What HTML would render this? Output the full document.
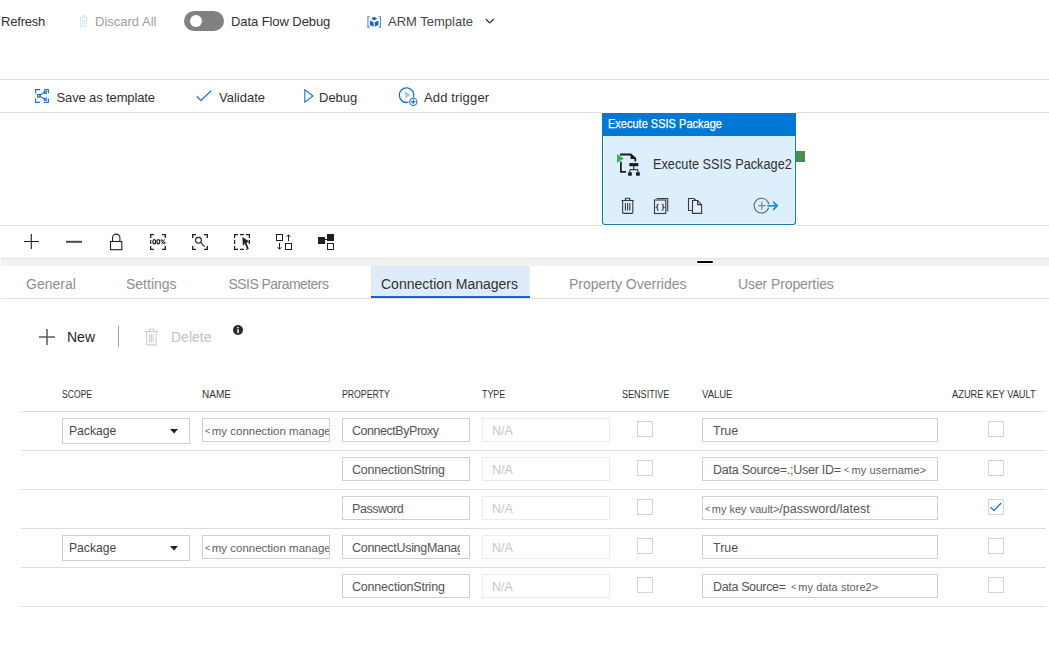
<!DOCTYPE html>
<html><head><meta charset="utf-8">
<style>
*{box-sizing:border-box;margin:0;padding:0}
html,body{width:1049px;height:652px;overflow:hidden;background:#fff}
body{font-family:"Liberation Sans",sans-serif;color:#323130;position:relative}
.a{position:absolute;white-space:nowrap}
.hl{position:absolute;height:1px;background:#e1dfdd}
.t14{font-size:13px;line-height:16px}
svg{position:absolute;overflow:visible}
.tab{position:absolute;top:266px;height:32px;font-size:14px;line-height:32px;color:#908e8c;white-space:nowrap}
.hd{position:absolute;top:388px;font-size:10px;line-height:13px;color:#323130;white-space:nowrap}
.rl{position:absolute;left:21px;width:1025px;height:1px;background:#e1dfdd}
.inp{position:absolute;height:24px;border:1px solid #d0d0d0;background:#fff;font-size:12.5px;line-height:25px;padding-left:9px;color:#555453;overflow:hidden;white-space:nowrap}
.dis{border-color:#edebe9;color:#c8c6c4}
.cb{position:absolute;width:16px;height:16px;border:1px solid #d4d4d4;background:#fff}
.ph{font-size:11px;color:#605e5c}
</style></head><body>

<!-- top bar -->
<div class="a t14" id="t_refresh" style="left:1px;letter-spacing:-0.2px;top:14px;color:#323130">Refresh</div>
<svg style="left:79px;top:15px" width="9" height="12" viewBox="0 0 9 12"><g fill="none" stroke="#d6e4f7" stroke-width="1"><path d="M0.5 2.5h8M3 2.5V0.8h3v1.7M1.5 2.5v9h6v-9"/></g><rect x="3" y="4" width="3" height="6" fill="#e3ecf9"/></svg>
<div class="a t14" id="t_discard" style="left:95px;top:14px;color:#a19f9d">Discard All</div>
<div class="a" style="left:184px;top:11px;width:40px;height:20px;border-radius:10px;background:#808080"></div>
<div class="a" style="left:190px;top:15px;width:12px;height:12px;border-radius:50%;background:#fff"></div>
<div class="a t14" id="t_dfd" style="left:231px;top:14px;letter-spacing:-0.08px">Data Flow Debug</div>
<svg style="left:367px;top:16px" width="14" height="12" viewBox="0 0 14 12"><g fill="none" stroke="#4f8ae8" stroke-width="1.1"><path d="M2.8 0.7H0.9V11.1H2.8M11.6 0.7H13.5V11.1H11.6"/></g><g fill="#1a5fd6"><path d="M7.2 0.8L10.2 2.6L7.2 4.4L4.2 2.6Z"/><path d="M2.9 4.6L6.6 6.3V10.7L2.9 9Z"/><path d="M11.5 4.6L7.8 6.3V10.7L11.5 9Z"/></g></svg>
<div class="a t14" id="t_arm" style="left:388px;top:14px;color:#484644">ARM Template</div>
<svg style="left:485px;top:18px" width="10" height="7" viewBox="0 0 10 7"><path d="M0.8 1L4.7 5L8.7 1" stroke="#323130" stroke-width="1.2" fill="none"/></svg>

<!-- toolbar 2 -->
<div class="hl" style="left:0;top:79px;width:1049px"></div>
<svg style="left:35px;top:89px" width="14" height="14" viewBox="0 0 14 14"><g stroke="#1a6fd9" stroke-width="1.15" fill="none"><path d="M0.6 4.6V0.6H5M9 0.6h4.4V4.6M13.4 9.4v4H9M5 13.4H0.6V9.4"/><rect x="2.6" y="5.5" width="2.2" height="2.6"/><rect x="9.3" y="2.3" width="2" height="2"/><rect x="9.3" y="9.3" width="2" height="2"/><path d="M4.8 6.3L9.3 3.6M4.8 7.3L9.3 10"/></g></svg>
<div class="a t14" id="t_save" style="left:56.5px;letter-spacing:-0.13px;top:90px">Save as template</div>
<svg style="left:196px;top:90px" width="16" height="12" viewBox="0 0 16 12"><path d="M0.8 6.5L5 10.5L15.2 0.8" stroke="#1a6fd9" stroke-width="1.2" fill="none"/></svg>
<div class="a t14" id="t_validate" style="left:219px;top:90px">Validate</div>
<svg style="left:304px;top:89px" width="10" height="14" viewBox="0 0 10 14"><path d="M0.8 0.8L9 7L0.8 13.2Z" stroke="#1a6fd9" stroke-width="1.1" fill="none"/></svg>
<div class="a t14" id="t_debug" style="left:319px;top:90px">Debug</div>
<svg style="left:399px;top:86.5px" width="20" height="19" viewBox="0 0 20 19"><path d="M14.5 10.5A7.3 7.3 0 1 0 9.5 15.2" stroke="#1a6fd9" stroke-width="1.3" fill="none"/><path d="M6 4.5L11.5 8L6 11.5Z" fill="#a9c8f0"/><circle cx="14.3" cy="14.9" r="3.6" fill="#fff" stroke="#1a6fd9" stroke-width="1.1"/><path d="M14.3 12.6v4.6M12 14.9h4.6" stroke="#1a6fd9" stroke-width="1.1"/></svg>
<div class="a t14" id="t_trigger" style="left:424px;letter-spacing:0.15px;top:90px">Add trigger</div>
<div class="hl" style="left:0;top:112px;width:602px"></div>
<div class="hl" style="left:796px;top:112px;width:253px"></div>

<!-- node -->
<div class="a" style="left:602px;top:113px;width:194px;height:112px;border:1px solid #1a7ba6;border-top:0;border-radius:0 0 3px 3px;background:#ddeefd;box-shadow:inset 1px -1px 0 #eaf5fe,inset -1px 0 0 #eaf5fe"></div>
<div class="a" style="left:602px;top:113px;width:194px;height:23px;background:#0078d4"></div>
<div class="a" id="t_hdr" style="left:607.5px;-webkit-text-stroke:0.25px #fff;transform:scaleX(0.918);transform-origin:0 0;top:116px;font-size:12px;line-height:16px;color:#fff">Execute SSIS Package</div>
<div class="a" style="left:796px;top:151px;width:9px;height:11px;background:#4a8f4f"></div>
<svg style="left:610px;top:145px" width="40" height="40" viewBox="0 0 40 40"><g fill="#1b1a19"><path d="M20.5 9.7L25.5 14H20.5Z"/><rect x="19.3" y="18.1" width="9" height="3.1"/><rect x="18.1" y="27.3" width="3.7" height="3.4"/><rect x="26" y="27.3" width="3.8" height="3.4"/></g><g stroke="#1b1a19" fill="none"><path d="M10 9.5H20.8L25.3 13.5V16.6" stroke-width="1.8"/><path d="M10.9 16.8V26.8H16" stroke-width="1.7"/><path d="M23.8 21V24.7M19.9 24.7H27.9M19.9 24.7V27.5M27.9 24.7V27.5" stroke-width="1"/></g><path d="M7 9L13.8 13.5L7 18.1Z" fill="#3ab54a"/></svg>
<div class="a" id="t_pkg2" style="left:653px;top:155px;transform:scaleX(0.91);transform-origin:0 0;font-size:14px;line-height:18px;color:#323130">Execute SSIS Package2</div>
<svg style="left:612px;top:190px" width="100" height="30" viewBox="0 0 100 30"><g stroke="#3b3a39" stroke-width="1.1" fill="none"><path d="M9.5 10.5H21.8"/><path d="M13.5 10.5V8.2H17.7V10.5"/><path d="M10.6 10.5V22.6Q10.6 23.4 11.4 23.4H20Q20.8 23.4 20.8 22.6V10.5"/><path d="M13.4 13V20.5M15.6 13V20.5M17.8 13V20.5"/><rect x="42.5" y="10" width="11.3" height="13.5"/><path d="M44.6 8.5H55.7V21.6"/><path d="M46.6 14.2H46.1Q45.3 14.2 45.3 15V16.6L44.3 17.2L45.3 17.8V19.3Q45.3 20.1 46.1 20.1H46.6M49.8 14.2H50.3Q51.1 14.2 51.1 15V16.6L52.1 17.2L51.1 17.8V19.3Q51.1 20.1 50.3 20.1H49.8" stroke-width="1.1"/><path d="M80.5 20.5H76.5V8.5H82L85 11.5"/><path d="M80.5 10.5H85.6L89.6 14.6V23.4H80.5Z" fill="#ddeefd"/><path d="M85.6 10.5V14.6H89.6"/></g></svg>
<svg style="left:745px;top:190px" width="40" height="30" viewBox="0 0 40 30"><circle cx="16.5" cy="15.6" r="7.4" stroke="#5f6670" stroke-width="1.1" fill="none"/><path d="M16.8 11.5v8.3M13.1 15.7h7.6" stroke="#7d8794" stroke-width="1.2"/><path d="M21.5 15.7H32.5M28 11.6l4.3 4.1L28 19.9" stroke="#fff" stroke-width="3.6" fill="none"/><path d="M22.2 15.7H32.5M28 11.6l4.3 4.1L28 19.9" stroke="#1597d2" stroke-width="1.9" fill="none"/></svg>

<div class="hl" style="left:0;top:225px;width:602px"></div>
<div class="hl" style="left:796px;top:225px;width:253px"></div>

<!-- zoom toolbar -->
<svg style="left:23px;top:233px" width="17" height="17" viewBox="0 0 17 17"><path d="M8.3 1v15M1 8.5h15" stroke="#201f1e" stroke-width="1.1"/></svg>
<svg style="left:66px;top:240px" width="16" height="3" viewBox="0 0 16 3"><path d="M0 1.8h16" stroke="#4a4a4a" stroke-width="2"/></svg>
<svg style="left:109px;top:233px" width="14" height="18" viewBox="0 0 14 18"><g stroke="#201f1e" stroke-width="1.1" fill="none"><rect x="1.5" y="8.5" width="11.3" height="8.2"/><path d="M3.5 8.5V4.8a3.7 3.7 0 0 1 7.4 0V8.5"/></g></svg>
<svg style="left:150px;top:234px" width="16" height="16" viewBox="0 0 16 16"><g stroke="#201f1e" stroke-width="1.3" fill="none"><path d="M0.7 4V0.7H4M12 0.7h3.3V4M15.3 12v3.3H12M4 15.3H0.7V12"/></g><path d="M0.7 6V10" stroke="#201f1e" stroke-width="1.2"/><g stroke="#201f1e" stroke-width="1.25" fill="none"><ellipse cx="4.3" cy="7.7" rx="1.45" ry="2.05"/><ellipse cx="8.3" cy="7.7" rx="1.45" ry="2.05"/><circle cx="11.7" cy="6.4" r="0.8" stroke-width="1"/><circle cx="14.4" cy="9" r="0.8" stroke-width="1"/><path d="M14.6 5.4L11.5 10" stroke-width="1"/></g></svg>
<svg style="left:192px;top:234px" width="16" height="16" viewBox="0 0 16 16"><g stroke="#201f1e" stroke-width="1.3" fill="none"><path d="M0.7 4V0.7H4M12 0.7h3.3V4M15.3 12v3.3H12M4 15.3H0.7V12"/></g><g stroke="#201f1e" stroke-width="1.1" fill="none"><circle cx="6.5" cy="6.3" r="2.9"/><path d="M8.6 8.4l4 4.2"/></g></svg>
<svg style="left:234px;top:234px" width="17" height="17" viewBox="0 0 17 17"><g stroke="#201f1e" stroke-width="1.2" fill="none"><path d="M0.6 4V0.6H4M6 0.6H10M12 0.6H15.4V4M15.4 6V10M0.6 6V10M0.6 12V15.4H4M6 15.4H10M12 15.4H13"/></g><path d="M8.4 3L15.9 7.9L12.3 8.6L14.8 14.8L13.3 15.6L10.8 9.6L8.9 12Z" fill="#201f1e"/></svg>
<svg style="left:276px;top:233px" width="17" height="18" viewBox="0 0 17 18"><g stroke="#201f1e" stroke-width="1" fill="none"><rect x="0.5" y="1.5" width="6" height="6"/><rect x="9.5" y="10.5" width="6" height="6"/><path d="M12.5 8V1.8M10.5 3.8L12.5 1.8L14.5 3.8M3.5 10V16.2M1.5 14.2L3.5 16.2L5.5 14.2"/></g></svg>
<svg style="left:318px;top:233px" width="17" height="18" viewBox="0 0 17 18"><rect x="0" y="4" width="7" height="7" fill="#201f1e"/><rect x="9" y="1" width="7" height="7" fill="#201f1e"/><rect x="9.5" y="10.5" width="6" height="6" stroke="#201f1e" stroke-width="1" fill="none"/><path d="M6.5 6.5h3" stroke="#201f1e" stroke-width="1"/></svg>

<!-- gray band -->
<div class="a" style="left:1px;top:258px;width:1048px;height:8px;background:#f1f1f1;border-top:1px solid #e3e3e3"></div>
<div class="a" style="left:696px;top:260px;width:18px;height:4px;background:#fff;border-radius:2px"></div>
<div class="a" style="left:697px;top:261px;width:16px;height:2px;background:#000;border-radius:1px"></div>

<!-- tabs -->
<div class="a" style="left:371px;top:266px;width:159px;height:32px;background:#deecf9"></div>
<div class="a" style="left:371px;top:296px;width:159px;height:2px;background:#0f62d8"></div>
<div class="tab" id="t_gen" style="left:26px;top:268px">General</div>
<div class="tab" id="t_set" style="left:126px;top:268px">Settings</div>
<div class="tab" id="t_ssis" style="left:228.5px;letter-spacing:-0.55px;top:268px">SSIS Parameters</div>
<div class="tab" id="t_cm" style="left:381px;top:268px;color:#323130">Connection Managers</div>
<div class="tab" id="t_po" style="left:569px;top:268px">Property Overrides</div>
<div class="tab" id="t_up" style="left:738px;letter-spacing:-0.1px;top:268px">User Properties</div>
<div class="hl" style="left:1px;top:298px;width:1048px"></div>

<!-- New/Delete -->
<svg style="left:38px;top:328px" width="18" height="18" viewBox="0 0 18 18"><path d="M9 1v16M1 9h16" stroke="#5a5958" stroke-width="1.5"/></svg>
<div class="a" id="t_new" style="left:67px;top:328px;font-size:14px;line-height:18px;color:#201f1e">New</div>
<div class="a" style="left:118px;top:326px;width:1px;height:21px;background:#a19f9d"></div>
<svg style="left:144px;top:328px" width="15" height="18" viewBox="0 0 15 18"><g stroke="#cfcecd" stroke-width="1.1" fill="none"><path d="M0.8 3.6h13.2M5.2 3.6V1.4h4.4v2.2M2.6 3.6v12.8q0 .5.5.5h8.6q.5 0 .5-.5V3.6M5.6 6.2v8.2M7.4 6.2v8.2M9.2 6.2v8.2"/></g></svg>
<div class="a" id="t_del" style="left:171px;top:328px;font-size:14px;line-height:18px;color:#c2c1c0">Delete</div>
<svg style="left:233px;top:325px" width="10" height="10" viewBox="0 0 10 10"><circle cx="5" cy="5" r="5" fill="#2b2a29"/><path d="M5 4.3v3.7" stroke="#fff" stroke-width="1.5"/><circle cx="5" cy="2.6" r="0.85" fill="#fff"/></svg>

<!-- table header -->
<div class="hd" style="left:62px;transform:scaleX(0.86);transform-origin:0 0">SCOPE</div>
<div class="hd" style="left:202px;transform:scaleX(1.0);transform-origin:0 0">NAME</div>
<div class="hd" style="left:342px;transform:scaleX(0.87);transform-origin:0 0">PROPERTY</div>
<div class="hd" style="left:482px;transform:scaleX(0.89);transform-origin:0 0">TYPE</div>
<div class="hd" style="left:622px;transform:scaleX(0.905);transform-origin:0 0">SENSITIVE</div>
<div class="hd" style="left:702px;transform:scaleX(0.95);transform-origin:0 0">VALUE</div>
<div class="hd" style="left:952px;transform:scaleX(0.93);transform-origin:0 0">AZURE KEY VAULT</div>

<div class="rl" style="top:411px"></div>
<div class="rl" style="top:450px"></div>
<div class="rl" style="top:489px"></div>
<div class="rl" style="top:528px"></div>
<div class="rl" style="top:567px"></div>
<div class="rl" style="top:606px"></div>

<!-- row 1 -->
<div class="inp" style="left:62px;top:418px;width:128px;height:26px;line-height:24px;padding-left:6px;font-size:13.5px;color:#484644"><span style="display:inline-block;transform:scaleX(0.9);transform-origin:0 0">Package</span></div>
<svg style="left:170px;top:429px" width="8" height="5" viewBox="0 0 8 5"><path d="M0 0h8L4 4.5Z" fill="#201f1e"/></svg>
<div class="inp" style="left:202px;top:418px;width:128px;height:24px;line-height:23px;padding-left:2px;font-size:11.5px;color:#605e5c;line-height:24px"><span style="font-size:9px;margin-right:1.5px;position:relative;top:-1px">&lt;</span><span>my connection manager&gt;</span></div>
<div class="inp" style="left:342px;top:418px;width:128px;letter-spacing:-0.46px">ConnectByProxy</div>
<div class="inp dis" style="left:482px;top:418px;width:128px">N/A</div>
<div class="cb" style="left:637px;top:421px"></div>
<div class="inp" style="left:702px;top:418px;width:236px;padding-left:10px">True</div>
<div class="cb" style="left:988px;top:421px"></div>

<!-- row 2 -->
<div class="inp" style="left:342px;top:457px;width:128px;letter-spacing:-0.2px">ConnectionString</div>
<div class="inp dis" style="left:482px;top:457px;width:128px">N/A</div>
<div class="cb" style="left:637px;top:460px"></div>
<div class="inp" style="left:702px;top:457px;width:236px;padding-left:10px"><span style="letter-spacing:-0.25px">Data Source=.;User ID=</span><span class="ph" style="position:absolute;left:141px;letter-spacing:0.15px"><span style="font-size:9px;margin-right:2px;position:relative;top:-1px">&lt;</span>my username&gt;</span></div>
<div class="cb" style="left:988px;top:460px"></div>

<!-- row 3 -->
<div class="inp" style="left:342px;top:496px;width:128px;letter-spacing:-0.45px">Password</div>
<div class="inp dis" style="left:482px;top:496px;width:128px">N/A</div>
<div class="cb" style="left:637px;top:499px"></div>
<div class="inp" style="left:702px;top:496px;width:236px;padding-left:2px"><span class="ph"><span style="font-size:9px;margin-right:1.5px;position:relative;top:-1px">&lt;</span>my key vault&gt;</span>/password/latest</div>
<div class="cb" style="left:988px;top:499px"></div>
<svg style="left:988px;top:499px" width="16" height="16" viewBox="0 0 16 16"><path d="M2.5 8.2L6 11.5L13.2 4" stroke="#1a6fd9" stroke-width="1.2" fill="none"/></svg>

<!-- row 4 -->
<div class="inp" style="left:62px;top:535px;width:128px;height:26px;line-height:24px;padding-left:6px;font-size:13.5px;color:#484644"><span style="display:inline-block;transform:scaleX(0.9);transform-origin:0 0">Package</span></div>
<svg style="left:170px;top:546px" width="8" height="5" viewBox="0 0 8 5"><path d="M0 0h8L4 4.5Z" fill="#201f1e"/></svg>
<div class="inp" style="left:202px;top:535px;width:128px;height:24px;line-height:23px;padding-left:2px;font-size:11.5px;color:#605e5c;line-height:24px"><span style="font-size:9px;margin-right:1.5px;position:relative;top:-1px">&lt;</span><span>my connection manager&gt;</span></div>
<div class="inp" style="left:342px;top:535px;width:128px;padding-right:9px;letter-spacing:-0.3px"><div style="overflow:hidden">ConnectUsingManagedIdentity</div></div>
<div class="inp dis" style="left:482px;top:535px;width:128px">N/A</div>
<div class="cb" style="left:637px;top:538px"></div>
<div class="inp" style="left:702px;top:535px;width:236px;padding-left:10px">True</div>
<div class="cb" style="left:988px;top:538px"></div>

<!-- row 5 -->
<div class="inp" style="left:342px;top:574px;width:128px;letter-spacing:-0.2px">ConnectionString</div>
<div class="inp dis" style="left:482px;top:574px;width:128px">N/A</div>
<div class="cb" style="left:637px;top:577px"></div>
<div class="inp" style="left:702px;top:574px;width:236px;padding-left:10px"><span style="letter-spacing:-0.35px">Data Source=</span><span class="ph" style="position:absolute;left:88px;letter-spacing:0.05px"><span style="font-size:9px;margin-right:2px;position:relative;top:-1px">&lt;</span>my data store2&gt;</span></div>
<div class="cb" style="left:988px;top:577px"></div>

</body></html>
